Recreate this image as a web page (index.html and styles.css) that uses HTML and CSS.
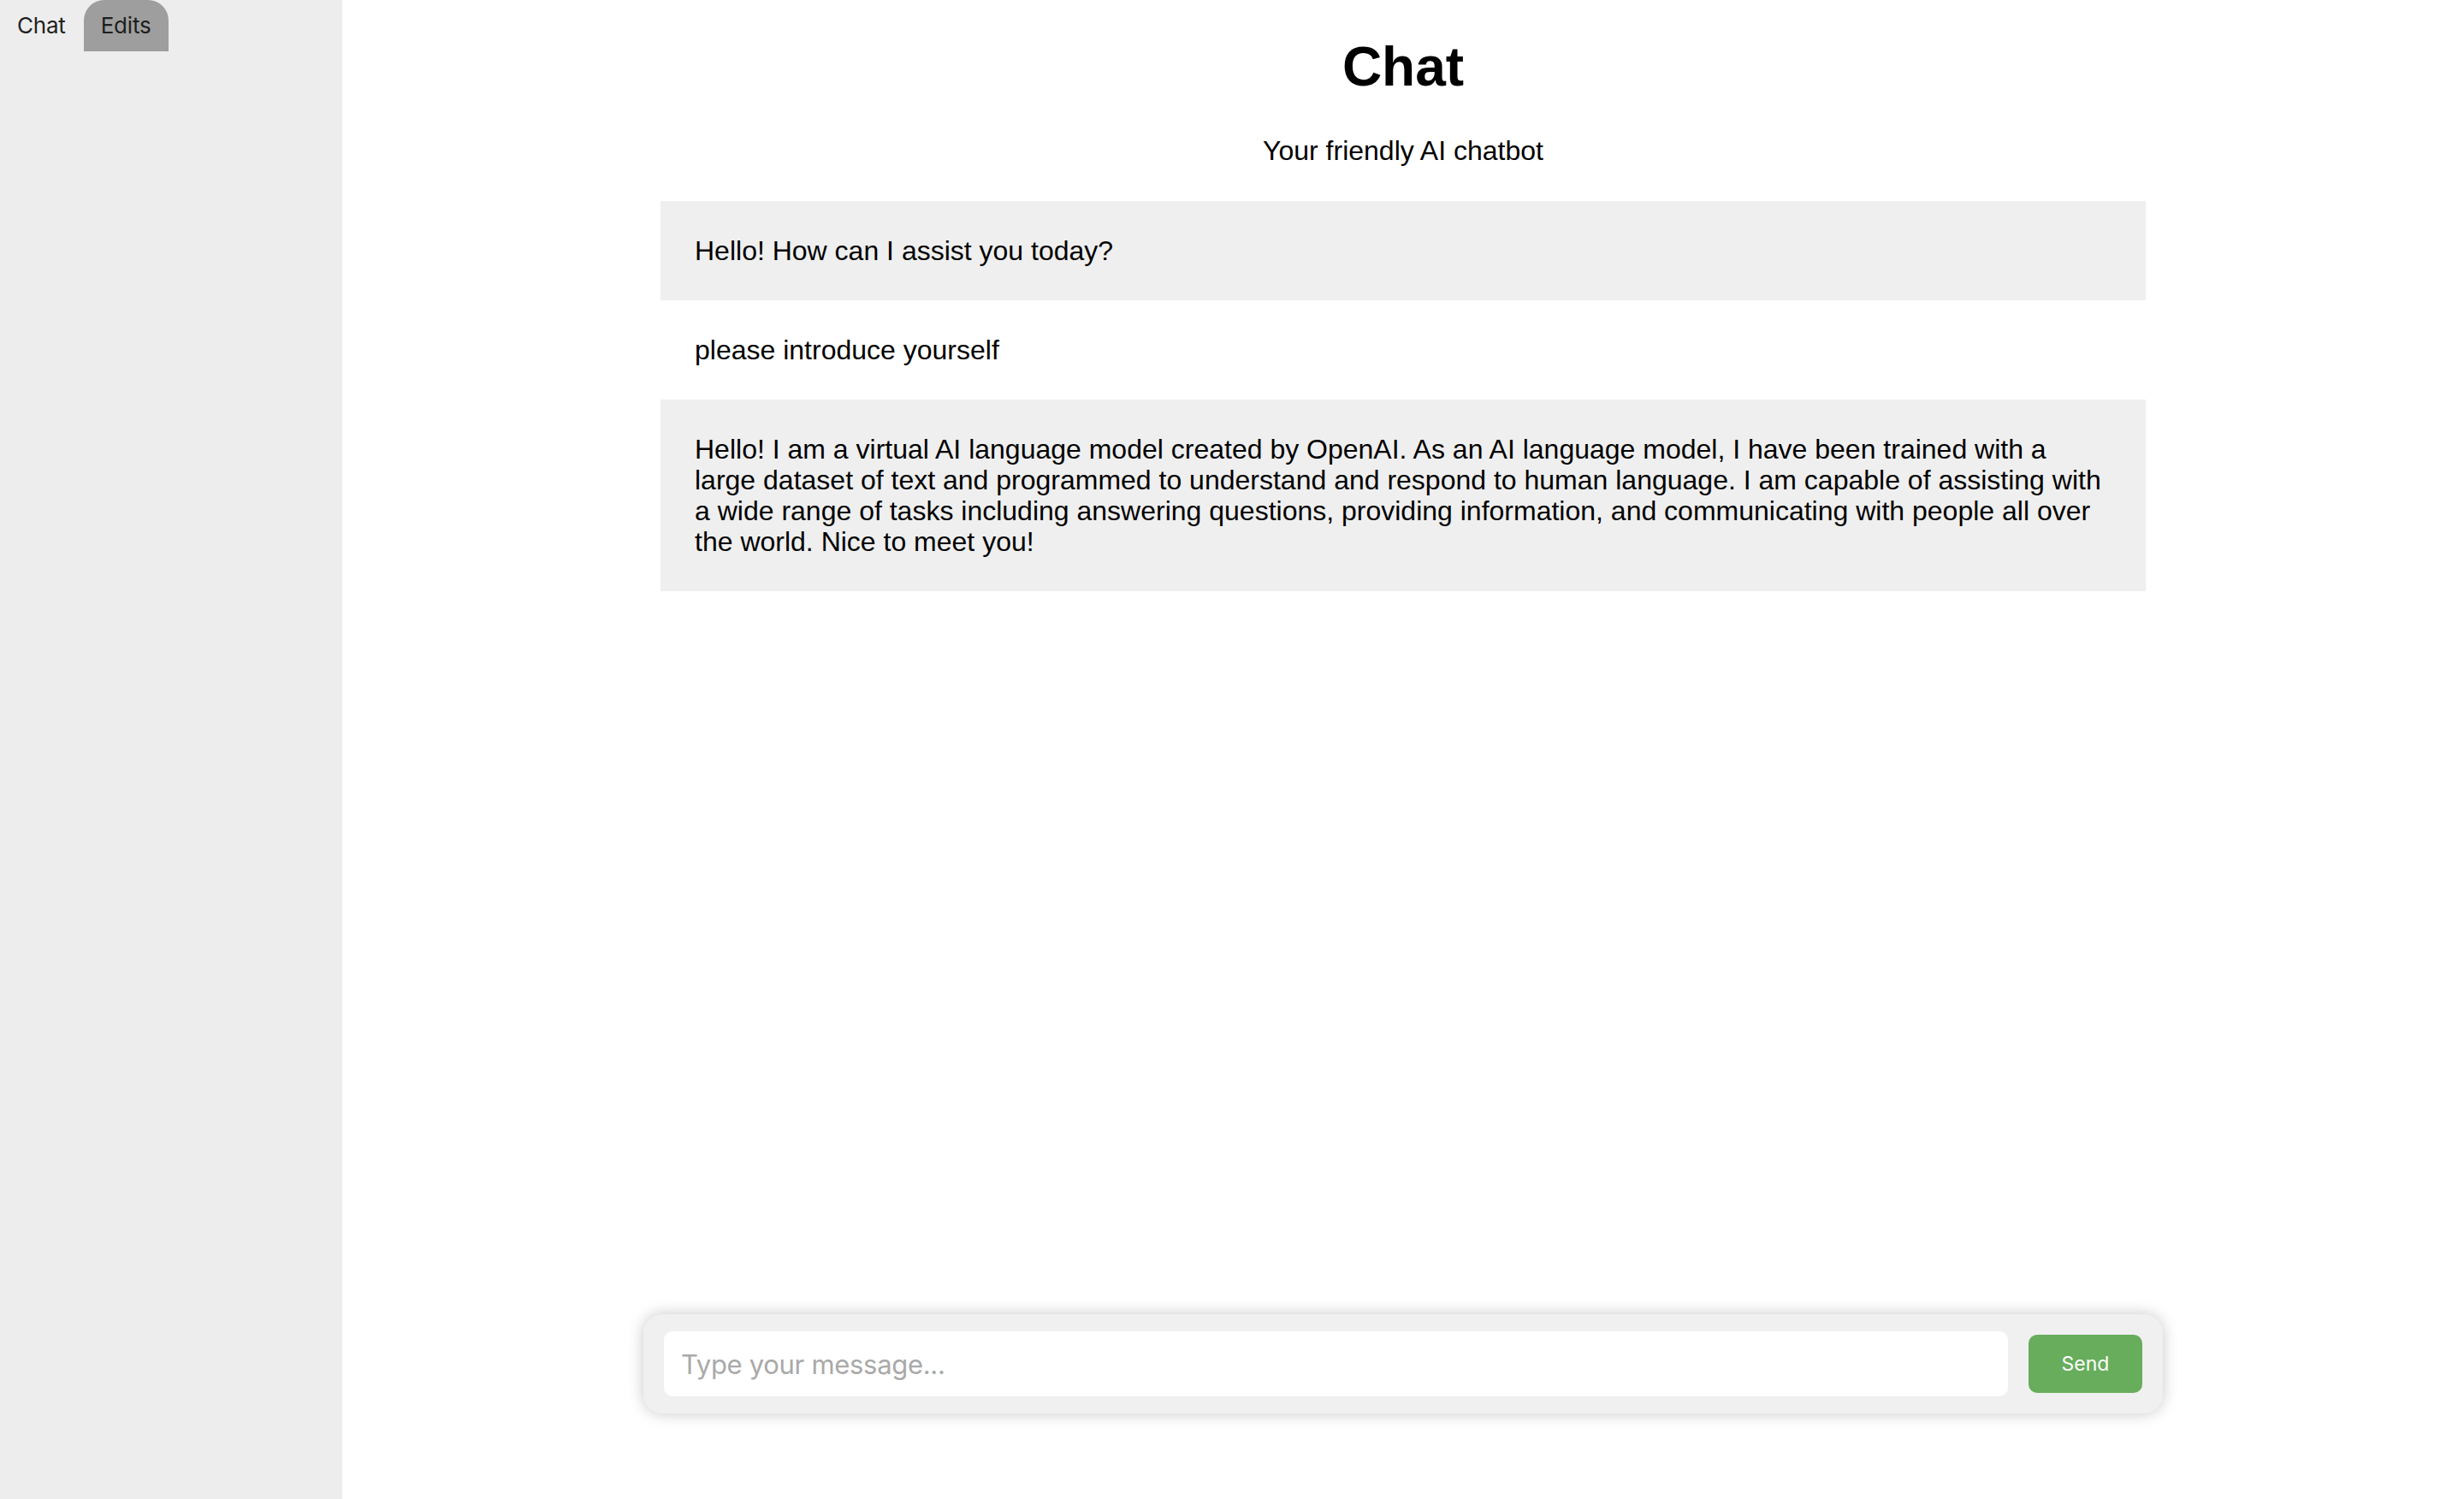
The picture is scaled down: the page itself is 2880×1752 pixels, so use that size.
FILE: index.html
```html
<!DOCTYPE html>
<html>
<head>
<meta charset="utf-8">
<title>Chat</title>
<link rel="stylesheet" href="styles.css">
</head>
<body>
<div class="app">
  <aside class="sidebar">
    <nav class="tabs">
      <div class="tab">Chat</div>
      <div class="tab tab-active">Edits</div>
    </nav>
  </aside>
  <main class="main">
    <div class="column">
      <h1 class="title">Chat</h1>
      <p class="subtitle">Your friendly AI chatbot</p>
      <div class="messages">
        <div class="msg msg-bot">Hello! How can I assist you today?</div>
        <div class="msg msg-user">please introduce yourself</div>
        <div class="msg msg-bot">Hello! I am a virtual AI language model created by OpenAI. As an AI language model, I have been trained with a large dataset of text and programmed to understand and respond to human language. I am capable of assisting with a wide range of tasks including answering questions, providing information, and communicating with people all over the world. Nice to meet you!</div>
      </div>
    </div>
    <form class="composer">
      <input class="composer-input" type="text" placeholder="Type your message...">
      <button class="composer-send" type="button">Send</button>
    </form>
  </main>
</div>
</body>
</html>
```

FILE: styles.css
```css
* { box-sizing: border-box; }
html, body { margin: 0; padding: 0; height: 100%; }
body {
  font-family: "Liberation Sans", Arial, sans-serif;
  color: #000;
  background: #fff;
}
.app {
  display: flex;
  height: 1752px;
}
.sidebar {
  width: 400px;
  flex: 0 0 400px;
  background: #ededed;
}
.tabs {
  display: flex;
}
.tab {
  font-family: Inter, "Noto Sans", sans-serif;
  font-size: 26px;
  color: #222;
  height: 60px;
  line-height: 60px;
  padding: 0 20px;
  letter-spacing: -0.2px;
}
.tab-active {
  background: #9e9e9e;
  border-radius: 24px 24px 0 0;
  color: #1e1e1e;
  margin-left: 1px;
}
.main {
  flex: 1;
  display: flex;
  flex-direction: column;
  align-items: center;
}
.column {
  width: 70%;
  flex: 1;
}
.title {
  font-size: 64px;
  font-weight: bold;
  text-align: center;
  margin: 41px 0 43px;
  line-height: 74px;
}
.subtitle {
  font-size: 32px;
  text-align: center;
  margin: 0 0 40px;
  line-height: 37px;
}
.messages {
  display: flex;
  flex-direction: column;
}
.msg {
  font-size: 32px;
  line-height: 36px;
  padding: 40px;
}
.msg-bot { background: #efefef; }
.msg-user { background: #fff; }
.composer {
  width: 1776px;
  margin: 0 0 100px;
  background: #f0f0f0;
  border-radius: 22px;
  box-shadow: 0 0 18px rgba(0, 0, 0, 0.22);
  padding: 20px 24px;
  display: flex;
  align-items: center;
  gap: 24px;
}
.composer-input {
  flex: 1;
  height: 76px;
  border: none;
  outline: none;
  border-radius: 10px;
  background: #fff;
  padding: 0 20px;
  font-family: Inter, "Noto Sans", sans-serif;
  font-size: 31px;
  letter-spacing: -0.3px;
  color: #000;
}
.composer-input::placeholder { color: #a9a9a9; }
.composer-send {
  width: 133px;
  height: 68px;
  border: none;
  border-radius: 10px;
  background: #67ad5c;
  color: #fff;
  font-family: Inter, "Noto Sans", sans-serif;
  font-size: 23px;
  padding: 0;
}
```
